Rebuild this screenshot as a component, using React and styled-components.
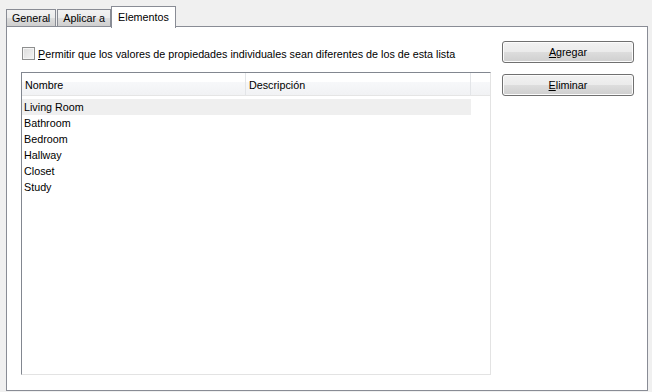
import React from "react";
import styled, { createGlobalStyle } from "styled-components";

const Global = createGlobalStyle`
  html, body { margin: 0; padding: 0; background: #f0f0f0; }
  body { font-family: Tahoma, "Liberation Sans", "DejaVu Sans", sans-serif; font-size: 10.75px; color: #000; }
  * { box-sizing: border-box; }
`;

const Window = styled.div`
  width: 652px;
  height: 392px;
  padding: 5px 4px 1px 6px;
  display: flex;
  flex-direction: column;
`;

const TabRow = styled.div`
  display: flex;
  align-items: flex-end;
  height: 22px;
  position: relative;
  z-index: 1;
`;

const Tab = styled.div`
  height: ${(p) => (p.$active ? "22px" : "18px")};
  padding: ${(p) => (p.$active ? "4px 6px 0 6px" : "2px 5px 0 5px")};
  margin-right: ${(p) => (p.$active ? "0" : "1px")};
  margin-left: ${(p) => (p.$active ? "-1px" : "0")};
  border: 1px solid #898c95;
  border-bottom: ${(p) => (p.$active ? "none" : "1px solid #898c95")};
  background: ${(p) =>
    p.$active ? "#fff" : "linear-gradient(#f2f2f2, #ebebeb 50%, #dddddd 51%, #cfcfcf)"};
  display: flex;
  align-items: flex-start;
  line-height: 13px;
  white-space: nowrap;
  margin-bottom: ${(p) => (p.$active ? "-1px" : "0")};
`;

const Panel = styled.div`
  flex: 1;
  margin-top: -1px;
  border: 1px solid #898c95;
  background: #fff;
  padding: 14px 0 15px 14px;
  display: grid;
  grid-template-columns: 470px 132px;
  column-gap: 11px;
`;

const LeftCol = styled.div`
  display: flex;
  flex-direction: column;
  padding-top: 6px;
`;

const CheckRow = styled.label`
  display: flex;
  align-items: center;
  height: 13px;
  gap: 3px;
  padding-left: 1px;
  white-space: nowrap;
`;

const CheckBox = styled.span`
  width: 13px;
  height: 13px;
  border: 1px solid #8e8f8f;
  background: linear-gradient(135deg, #dcdcdc, #f4f4f4);
  box-shadow: inset 0 0 0 1px #f5f5f5;
  flex: none;
`;

const U = styled.span`
  text-decoration: underline;
`;

const ListBox = styled.div`
  margin-top: 12px;
  flex: 1;
  border-top: 1px solid #828790;
  border-left: 1px solid #828790;
  border-right: 1px solid #e3e3e3;
  border-bottom: 1px solid #e3e3e3;
  background: #fff;
  display: flex;
  flex-direction: column;
`;

const HeaderRow = styled.div`
  display: grid;
  grid-template-columns: 224px 225px 1fr;
  height: 23px;
  background: linear-gradient(#ffffff, #ffffff 40%, #f7f8fa 41%, #f1f2f4);
  border-bottom: 1px solid #e5e5e5;
`;

const HeaderCell = styled.div`
  display: flex;
  align-items: center;
  padding-left: 3px;
  border-right: 1px solid #e3e5e8;
  padding-top: 2px;
`;

const Rows = styled.div`
  padding-top: 3px;
  display: flex;
  flex-direction: column;
`;

const Row = styled.div`
  width: 449px;
  height: 16px;
  line-height: 16px;
  padding-left: 2px;
  background: ${(p) => (p.$hover ? "#efefef" : "transparent")};
`;

const RightCol = styled.div`
  display: flex;
  flex-direction: column;
  gap: 11px;
`;

const Button = styled.button`
  font: inherit;
  color: #000;
  width: 132px;
  height: 22px;
  border: 1px solid #707070;
  border-radius: 3px;
  background: linear-gradient(#f2f2f2, #ebebeb 50%, #dddddd 51%, #cfcfcf);
  box-shadow: inset 0 0 0 1px #fcfcfc;
  padding: 0;
`;

const items = ["Living Room", "Bathroom", "Bedroom", "Hallway", "Closet", "Study"];

export default function App() {
  return (
    <Window>
      <Global />
      <TabRow>
        <Tab>General</Tab>
        <Tab>Aplicar a</Tab>
        <Tab $active>Elementos</Tab>
      </TabRow>
      <Panel>
        <LeftCol>
          <CheckRow>
            <CheckBox />
            <span>
              <U>P</U>ermitir que los valores de propiedades individuales sean diferentes de los de esta lista
            </span>
          </CheckRow>
          <ListBox>
            <HeaderRow>
              <HeaderCell>Nombre</HeaderCell>
              <HeaderCell>Descripción</HeaderCell>
              <div />
            </HeaderRow>
            <Rows>
              {items.map((it, i) => (
                <Row key={it} $hover={i === 0}>
                  {it}
                </Row>
              ))}
            </Rows>
          </ListBox>
        </LeftCol>
        <RightCol>
          <Button>
            <U>A</U>gregar
          </Button>
          <Button>
            <U>E</U>liminar
          </Button>
        </RightCol>
      </Panel>
    </Window>
  );
}
